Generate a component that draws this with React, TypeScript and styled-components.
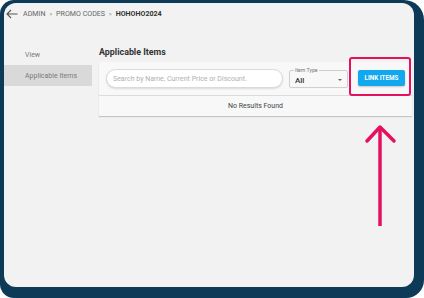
import styled, { createGlobalStyle } from 'styled-components'

const GlobalStyle = createGlobalStyle`
  html, body {
    margin: 0;
    padding: 0;
    background: #ffffff;
  }
  body {
    font-family: Roboto, "Liberation Sans", Arial, sans-serif;
  }
`

const Frame = styled.div`
  width: 424px;
  height: 298px;
  box-sizing: border-box;
  padding: 3px 10px 11px 4px;
  background: #0d3a56;
  border-radius: 14px 20px 18px 14px;
`

const Panel = styled.div`
  position: relative;
  height: 100%;
  background: #f2f2f2;
  border-radius: 12px;
  display: flex;
  flex-direction: column;
  overflow: hidden;
`

const Header = styled.div`
  height: 21px;
  display: flex;
  align-items: center;
  padding-left: 2px;
  gap: 5px;
`

const Crumbs = styled.div`
  display: flex;
  align-items: center;
  gap: 4px;
  font-size: 7.1px;
  color: #555;
`

const Crumb = styled.span<{ $current?: boolean }>`
  font-weight: ${(p) => (p.$current ? 700 : 400)};
  color: ${(p) => (p.$current ? '#333' : '#666')};
`

const Sep = styled.span`
  font-size: 5px;
  color: #777;
`

const Body = styled.div`
  margin-top: 20px;
  display: grid;
  grid-template-columns: 88px 1fr;
  column-gap: 7px;
  padding-right: 2px;
`

const Sidebar = styled.nav`
  display: flex;
  flex-direction: column;
`

const NavItem = styled.div<{ $active?: boolean }>`
  height: 21px;
  display: flex;
  align-items: center;
  padding-left: 21px;
  font-size: 7px;
  color: #7a7a7a;
  background: ${(p) => (p.$active ? '#d9d9d9' : 'transparent')};
`

const Main = styled.div`
  display: flex;
  flex-direction: column;
`

const Title = styled.h2`
  margin: 0 0 2px;
  height: 16px;
  line-height: 16px;
  font-size: 8.9px;
  font-weight: 700;
  color: #333;
`

const Card = styled.div`
  background: #f8f8f8;
  box-shadow: 0 1px 1px rgba(0, 0, 0, 0.18);
`

const Toolbar = styled.div`
  height: 34px;
  box-sizing: border-box;
  padding: 7px 7px 0;
  display: flex;
  align-items: flex-start;
  border-bottom: 1px solid #dcdcdc;
`

const Search = styled.div`
  flex: 1;
  height: 19px;
  box-sizing: border-box;
  background: #fff;
  border: 1px solid #dadada;
  border-radius: 10px;
  box-shadow: 0 1px 2px rgba(0, 0, 0, 0.12);
  display: flex;
  align-items: center;
  padding-left: 6px;
  font-size: 7px;
  color: #b0b0b0;
`

const Select = styled.fieldset`
  margin: 1px 0 0 6px;
  padding: 0 5px;
  width: 59px;
  height: 18px;
  box-sizing: border-box;
  border: 1px solid #cfcfcf;
  border-radius: 2px;
  display: flex;
  align-items: center;
  justify-content: space-between;
  position: relative;
`

const Legend = styled.legend`
  position: absolute;
  top: -4px;
  left: 4px;
  padding: 0 1px;
  font-size: 5.2px;
  line-height: 6px;
  color: #777;
  background: #f8f8f8;
`

const Value = styled.span`
  font-size: 8px;
  font-weight: 500;
  color: #333;
  margin-top: 2px;
`

const Caret = styled.span`
  width: 0;
  height: 0;
  border-left: 2px solid transparent;
  border-right: 2px solid transparent;
  border-top: 2px solid #666;
  margin-top: 1px;
`

const Button = styled.button`
  margin: 1px 0 0 10px;
  width: 47px;
  height: 16px;
  border: none;
  border-radius: 2px;
  background: #12a8ee;
  color: #fff;
  font-family: inherit;
  font-size: 6.3px;
  font-weight: 700;
  padding: 0;
  box-shadow: 0 1px 2px rgba(0, 0, 0, 0.2);
`

const Empty = styled.div`
  height: 20px;
  display: flex;
  align-items: center;
  justify-content: center;
  font-size: 7px;
  color: #444;
`

const Highlight = styled.div`
  position: absolute;
  left: 345px;
  top: 54px;
  width: 62px;
  height: 39px;
  box-sizing: border-box;
  border: 2px solid #e5105e;
  border-radius: 3px;
`

const Arrow = styled.svg`
  position: absolute;
  left: 360px;
  top: 117px;
`

export default function App() {
  return (
    <>
      <GlobalStyle />
      <Frame>
        <Panel>
          <Header>
            <svg width="12" height="10" viewBox="0 0 12 10">
              <path d="M1 5H11.5M5 1L1 5L5 9" fill="none" stroke="#555" strokeWidth="1.1" />
            </svg>
            <Crumbs>
              <Crumb>ADMIN</Crumb>
              <Sep>&gt;</Sep>
              <Crumb>PROMO CODES</Crumb>
              <Sep>&gt;</Sep>
              <Crumb $current>HOHOHO2024</Crumb>
            </Crumbs>
          </Header>
          <Body>
            <Sidebar>
              <NavItem>View</NavItem>
              <NavItem $active>Applicable Items</NavItem>
            </Sidebar>
            <Main>
              <Title>Applicable Items</Title>
              <Card>
                <Toolbar>
                  <Search>Search by Name, Current Price or Discount.</Search>
                  <Select>
                    <Legend>Item Type</Legend>
                    <Value>All</Value>
                    <Caret />
                  </Select>
                  <Button>LINK ITEMS</Button>
                </Toolbar>
                <Empty>No Results Found</Empty>
              </Card>
            </Main>
          </Body>
          <Highlight />
          <Arrow width="34" height="110" viewBox="0 0 34 110">
            <path d="M16 7V106" stroke="#e5105e" strokeWidth="3.5" fill="none" />
            <path d="M3 21L16 7L30 21" stroke="#e5105e" strokeWidth="3.5" fill="none" strokeLinecap="round" strokeLinejoin="round" />
          </Arrow>
        </Panel>
      </Frame>
    </>
  )
}
